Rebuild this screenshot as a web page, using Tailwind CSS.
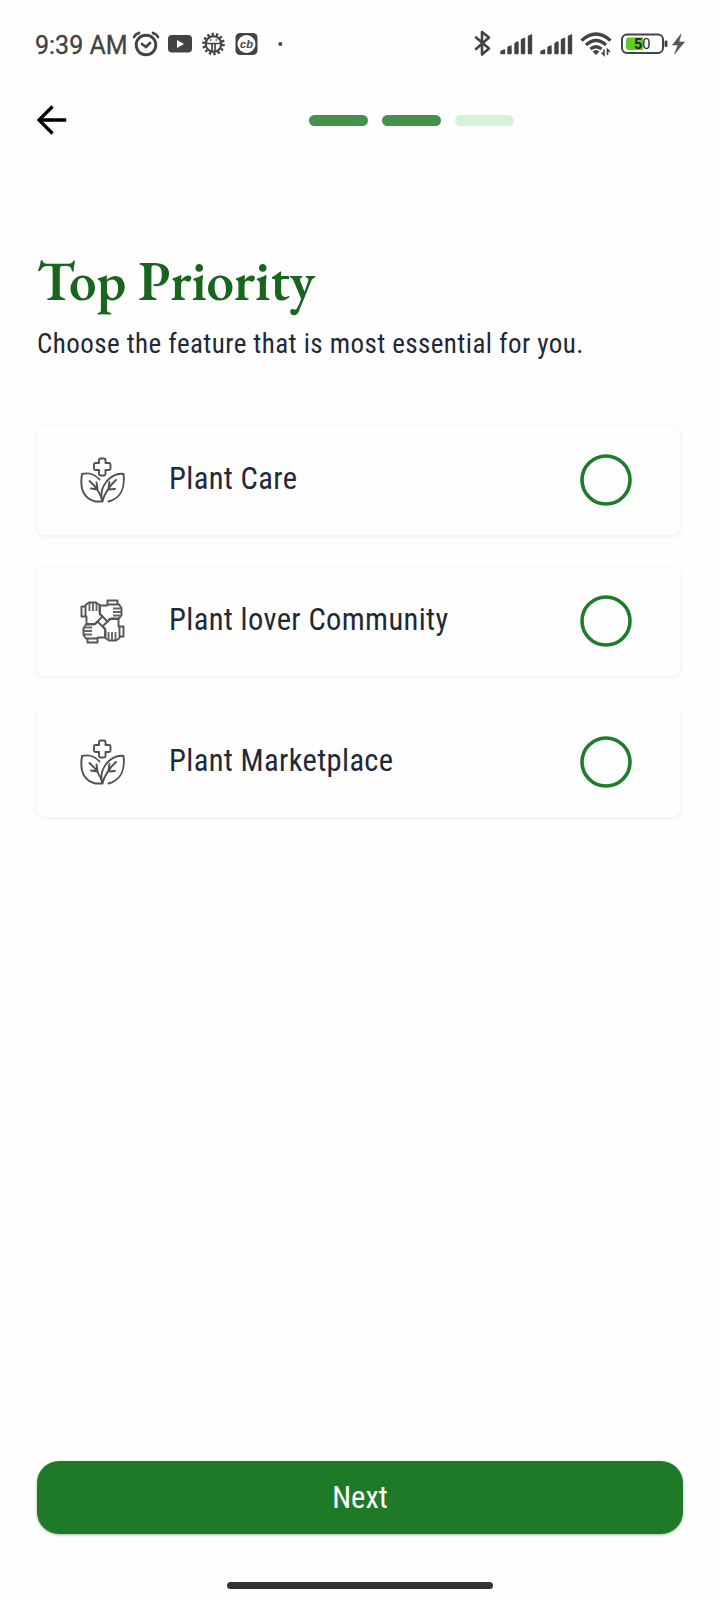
<!DOCTYPE html>
<html lang="en">
<head>
<meta charset="utf-8">
<title>Top Priority</title>
<script src="https://cdn.jsdelivr.net/npm/@tailwindcss/browser@4"></script>
</head>
<body class="bg-[#fefefe]">
<svg class="hidden">
  <symbol id="leaf" viewBox="0 0 46 46">
    <g fill="none" stroke="#505050" stroke-width="1.900" stroke-linejoin="round" stroke-linecap="round">
      <path d="M19 3Q19 1.500 20.500 1.500H24Q25.500 1.500 25.500 3V6H29Q30.500 6 30.500 7.500V11.500Q30.500 13 29 13H25.500V17Q25.500 18.500 24 18.500H20.500Q19 18.500 19 17V13H15.500Q14 13 14 11.500V7.500Q14 6 15.500 6H19Z"/>
      <path d="M19.500 22.500C15 17 8 15.500 2 17C0 29 2 41 15.500 44.500H22.500C20 37 22 30 27 24C32 18.500 38 16 43.500 17C45 29 42 41 28.500 44.500"/>
      <path d="M9.500 24Q19 32 22.500 44M11 31.500L17.500 32.500M16.500 25.500L17.500 32M36 23Q26 32 22.500 44M29.500 25L28.500 31M35 32L28 32.500"/>
    </g>
  </symbol>
  <symbol id="hands" viewBox="0 0 46 46">
    <defs>
      <g id="hand">
        <path d="M5.500 8.500H1.500V18.500H5.500M5.500 7L9 4.500H16L19.500 7V15L22.500 18.500L17.500 23.500L15.500 26H6.500V19L5.500 17Z" fill="none" stroke="#555" stroke-width="1.900" stroke-linejoin="round"/>
        <path d="M9.500 5V13M13 5V13M16.500 5V13" stroke="#666" stroke-width="1.900"/>
      </g>
    </defs>
    <use href="#hand"/>
    <use href="#hand" transform="rotate(90 22.500 23.500)"/>
    <use href="#hand" transform="rotate(180 22.500 23.500)"/>
    <use href="#hand" transform="rotate(270 22.500 23.500)"/>
  </symbol>
</svg>
<div class="flex h-[1600px] w-[720px] flex-col overflow-hidden font-['Roboto_Condensed',Roboto,sans-serif] text-[#1f2937]">
  <header class="flex h-[88px] items-center pl-[35px] text-[#434343]">
    <span class="w-[98px] whitespace-nowrap pt-[3px] font-[Roboto,sans-serif] text-[25px] leading-none [-webkit-text-stroke:0.300px_#434343]">9:39 AM</span>
    <svg class="h-[50px] w-[167px]" viewBox="133 19 167 50">
      <g fill="none" stroke="#434343" stroke-linecap="round">
        <circle cx="146" cy="45" r="9.800" stroke-width="2.900"/>
        <path d="M134 37Q135.500 34 139 33M153 33Q156.500 34 158 37M142 44L146 47L150 43" stroke-width="2.700"/>
      </g>
      <rect x="168" y="35" width="24" height="17.500" rx="4" fill="#434343"/><path d="M177 40L184 44L177 48Z" fill="#fefefe"/>
      <circle cx="213.500" cy="44" r="9.900" fill="none" stroke="#434343" stroke-width="2.800" stroke-dasharray="2.300 2.143"/>
      <circle cx="213.500" cy="44" r="7.800" fill="none" stroke="#434343" stroke-width="2.200"/>
      <path d="M206 43.500H221M212 44V51M215 44V51" stroke="#434343" stroke-width="1.700"/>
      <path d="M210 40H211.500M215.500 40H217" stroke="#434343" stroke-width="1.300"/>
      <rect x="235.500" y="33" width="22" height="22" rx="4.500" fill="#434343"/><circle cx="246.500" cy="44" r="9" fill="#fefefe"/>
      <text x="246.500" y="48" text-anchor="middle" font-family="Liberation Sans" font-size="11" font-weight="700" font-style="italic" fill="#434343">cb</text>
      <circle cx="280.300" cy="44" r="2" fill="#434343"/>
    </svg>
    <svg class="ml-[160px] h-[50px] w-[240px]" viewBox="460 19 240 50">
      <g fill="none" stroke="#434343" stroke-width="2.600" stroke-linejoin="round" stroke-linecap="round">
        <path d="M476 37.500L489 48.500L482 54.500V32L489 37.500L476 49"/>
      </g>
      <g id="sig" fill="#434343" stroke="#434343" stroke-width="1.400" stroke-linejoin="round">
        <path d="M501 53.500V51.500L504.500 50V53.500ZM508 53.500V47.500L511 46V53.500ZM515 53.500V43.500L518 42V53.500ZM521.500 53.500V40L524.500 38.500V53.500ZM528.500 53.500V36.500L531.500 35V53.500Z"/>
      </g>
      <use href="#sig" x="40"/>
      <g fill="none" stroke="#434343" stroke-width="3.200">
        <path d="M581.500 40.500Q596 27.500 610.500 40.500M586 45Q596 36 606 45M590.500 49Q596 44.500 601.500 49"/>
      </g>
      <path d="M592.500 51.500Q596 48.500 599.500 51.500L596 55Z" fill="#434343"/>
      <path d="M604 49.500V55L601.500 52.500M607.500 55V49.500L610 52" fill="none" stroke="#434343" stroke-width="1.600"/>
      <rect x="622" y="34.500" width="41" height="18.500" rx="5" fill="none" stroke="#434343" stroke-width="2"/>
      <path d="M629 37.500H643V50H629Q626 50 626 47V40.500Q626 37.500 629 37.500Z" fill="#5fcb20"/>
      <text x="634" y="49" font-family="Roboto" font-size="14.500" fill="#222"><tspan font-weight="700">5</tspan><tspan>0</tspan></text>
      <rect x="664.500" y="40.500" width="3" height="6.500" rx="1.200" fill="#434343"/>
      <path d="M681 34L672.500 45H678L674.500 54L684.500 42H679Z" fill="#555" stroke="#555" stroke-width=".6"/>
    </svg>
  </header>
  <nav class="flex h-[64px] items-center pl-[37px]">
    <svg class="h-[30px] w-[30px]" viewBox="0 0 30 30" fill="none" stroke="#000" stroke-width="3.300"><path d="M29.200 15H2M15.500 1.500L2 15L15.500 28.500"/></svg>
    <div class="ml-[242px] flex gap-[14px]">
      <span class="h-[11px] w-[59px] rounded-full bg-[#43924c]"></span>
      <span class="h-[11px] w-[59px] rounded-full bg-[#43924c]"></span>
      <span class="h-[11px] w-[59px] rounded-full bg-[#d3f4d8]"></span>
    </div>
  </nav>
  <main class="flex flex-1 flex-col px-[37px] pt-[97px]">
    <h1 class="h-[77px] whitespace-nowrap font-['EB_Garamond','Liberation_Serif',serif] text-[55px] leading-[64px] font-semibold tracking-[-0.200px] text-[#17651f]">Top Priority</h1>
    <p class="h-[100px] whitespace-nowrap text-[27px] leading-[36px] tracking-[0.430px] [font-stretch:75%]">Choose the feature that is most essential for you.</p>
    <ul class="flex flex-col gap-[32px]">
      <li class="flex h-[109px] w-[643px] items-center rounded-lg bg-[#fefefe] pr-[48px] pb-[2px] pl-[43px] shadow-[0_1px_5px_rgba(0,0,0,0.08)]"><svg class="h-[46px] w-[46px]"><use href="#leaf"/></svg><span class="ml-[43px] flex-1 whitespace-nowrap pb-[2px] text-[30.500px] tracking-[0.380px] [font-stretch:75%]">Plant Care</span><svg class="size-[52px]" viewBox="0 0 52 52"><circle cx="26" cy="26" r="24" fill="none" stroke="#1f7c29" stroke-width="3.600"/></svg></li>
      <li class="flex h-[109px] w-[643px] items-center rounded-lg bg-[#fefefe] pr-[48px] pb-[2px] pl-[43px] shadow-[0_1px_5px_rgba(0,0,0,0.08)]"><svg class="h-[46px] w-[46px]"><use href="#hands"/></svg><span class="ml-[43px] flex-1 whitespace-nowrap pb-[2px] text-[30.500px] tracking-[0.380px] [font-stretch:75%]">Plant lover Community</span><svg class="size-[52px]" viewBox="0 0 52 52"><circle cx="26" cy="26" r="24" fill="none" stroke="#1f7c29" stroke-width="3.600"/></svg></li>
      <li class="flex h-[109px] w-[643px] items-center rounded-lg bg-[#fefefe] pr-[48px] pb-[2px] pl-[43px] shadow-[0_1px_5px_rgba(0,0,0,0.08)]"><svg class="h-[46px] w-[46px]"><use href="#leaf"/></svg><span class="ml-[43px] flex-1 whitespace-nowrap pb-[2px] text-[30.500px] tracking-[0.380px] [font-stretch:75%]">Plant Marketplace</span><svg class="size-[52px]" viewBox="0 0 52 52"><circle cx="26" cy="26" r="24" fill="none" stroke="#1f7c29" stroke-width="3.600"/></svg></li>
    </ul>
  </main>
  <footer class="flex h-[139px] flex-col items-center">
    <button class="flex h-[73px] w-[646px] items-center justify-center rounded-[22px] bg-[#1f7a28] pt-px text-[30.500px] text-white shadow-[0_1px_3px_rgba(0,0,0,0.3)] [font-stretch:75%]">Next</button>
    <div class="mt-[48px] h-[7px] w-[266px] rounded-full bg-[#333]"></div>
  </footer>
</div>
</body>
</html>
